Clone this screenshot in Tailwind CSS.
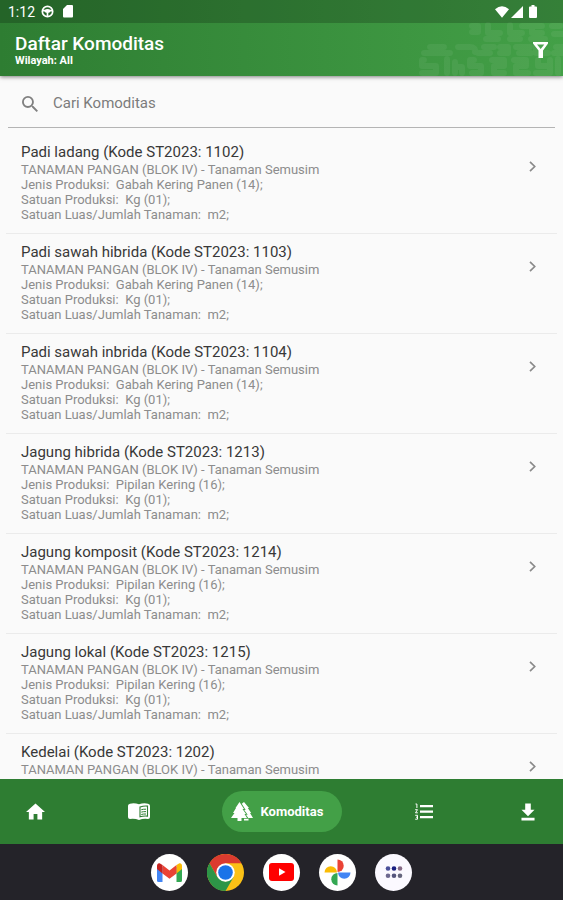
<!DOCTYPE html>
<html lang="id">
<head>
<meta charset="utf-8">
<meta name="viewport" content="width=device-width, initial-scale=1">
<title>Daftar Komoditas</title>
<script src="https://cdn.jsdelivr.net/npm/@tailwindcss/browser@4"></script>
</head>
<body class="flex h-screen flex-col overflow-hidden bg-[#fafafa] font-['Roboto',sans-serif]">

<header class="relative z-10 shrink-0 bg-linear-to-r from-[#2e7d32] to-[#43a047] text-white shadow-[0_1px_4px_rgba(0,0,0,0.5)]">
  <svg class="absolute right-0 bottom-0 h-[76px] w-[146px]" viewBox="417 0 146 76" fill="none" stroke="#fff" stroke-opacity=".06" stroke-width="6" stroke-linecap="round" stroke-linejoin="round" aria-hidden="true">
    <path d="M472 26h6v6h-6M488 25v8h12M510 25v8h12M522 26h10M542 26h-10v7h10M552 26h8M486 39h12M510 39h10M531 39h14M554 34h9"/>
    <path d="M430 47h14M424 53h26M458 47h12q6 0 5 5M478 53h12M484 47h10M500 47h8v6h-8M516 47h14M519 53h12M542 46h-6v7h12M556 47h7M554 53h9"/>
    <path d="M424 60h-2v6h14v7h-14M447 59v14M455 62v11M455 67h7v6M474 60h-4v6h11v7h-9M492 60h12v6h-10v7h10M514 60h12v6h-10v7h12M538 60v6h12v7h-14M550 60v6M558 59v14"/>
  </svg>
  <div class="relative flex h-[23px] items-center justify-between bg-black/20 pr-[22px] pl-2">
    <div class="flex items-center gap-[6px]">
      <span class="text-sm leading-4">1:12</span>
      <svg class="size-[13px]" viewBox="0 0 14 14" fill="none" stroke="#fff" stroke-width="1.8" aria-hidden="true"><circle cx="7" cy="7" r="5.6"/><path d="M2 6h10M7 8v4"/><path d="M4 5.5q3-2.500 6 0v2q-3 2-6 0z" fill="#fff" stroke="none"/></svg>
      <svg class="ml-[3px] h-[13px] w-[10px]" viewBox="0 0 10 13" fill="#fff" aria-hidden="true"><path d="M4 0h5a1 1 0 0 1 1 1v10.500a1 1 0 0 1-1 1H1a1 1 0 0 1-1-1V4z"/></svg>
    </div>
    <div class="flex items-center gap-[2px]">
      <svg class="h-3 w-[14px]" viewBox="0 0 14 12" fill="#fff" aria-hidden="true"><path d="M0 3.200Q7-2.600 14 3.200L7 11.800z"/></svg>
      <svg class="size-3" viewBox="0 0 12 12" fill="#fff" aria-hidden="true"><path d="M12 0v12H0z"/></svg>
      <svg class="mx-1 h-[13px] w-2" viewBox="0 0 8 13" fill="#fff" aria-hidden="true"><path d="M2.500 0h3v1.500H7a1 1 0 0 1 1 1V12a1 1 0 0 1-1 1H1a1 1 0 0 1-1-1V2.500a1 1 0 0 1 1-1h1.500z"/></svg>
    </div>
  </div>
  <div class="relative flex h-[53px] items-center justify-between pr-[14px] pl-[15px]">
    <div>
      <h1 class="text-[19px] leading-[22px] font-medium">Daftar Komoditas</h1>
      <p class="text-[11px] leading-3 font-bold">Wilayah: All</p>
    </div>
    <button type="button" aria-label="Filter"><svg class="h-4 w-[17px]" viewBox="0 0 17 16" fill="#fff" aria-hidden="true"><path fill-rule="evenodd" d="M1 0h15v1.500L11 8.500V16H6.500V8.500L1 1.500zM5 2.500l3.700 4.500L12.300 2.500z"/></svg></button>
  </div>
</header>

<main class="min-h-0 flex-1 overflow-hidden">
  <form class="mx-2 flex h-[52px] items-center gap-[15px] border-b border-[#b4b4b4] pl-[14px]" role="search">
    <svg class="mt-[5px] size-4 shrink-0" viewBox="3 3 17.500 17.500" fill="#808080" aria-hidden="true"><path d="M15.500 14h-.79l-.28-.27A6.470 6.470 0 0 0 16 9.500 6.500 6.500 0 1 0 9.500 16c1.610 0 3.090-.59 4.230-1.570l.27.28v.79l5 4.990L20.490 19l-4.990-5zm-6 0C7.010 14 5 11.990 5 9.500S7.010 5 9.500 5 14 7.010 14 9.500 11.990 14 9.500 14z"/></svg>
    <input type="search" aria-label="Cari Komoditas" placeholder="Cari Komoditas" class="min-w-0 flex-1 bg-transparent pt-0.5 text-[15px] leading-5 text-[#333] outline-none placeholder:text-[#7c7c7c]">
  </form>
  <ul id="daftar" class="pt-[6px]"></ul>
</main>

<template id="baris">
  <li class="mx-[6px] border-b border-[#ebebeb]">
    <a href="#" class="flex items-start justify-between pt-[9px] pr-[21px] pb-[11px] pl-[15px]">
      <div>
        <h2 class="text-[15px] leading-[19px] text-[#383838]"></h2>
        <p class="text-[13px] leading-[15px] whitespace-pre text-[#8c8c8c]"></p>
      </div>
      <svg class="mt-[18px] h-[11px] w-[7px]" viewBox="0 0 7 11" fill="none" stroke="#8a8a8a" stroke-width="1.700" aria-hidden="true"><path d="M1 .8 5.700 5.500 1 10.200"/></svg>
    </a>
  </li>
</template>

<nav class="flex h-[65px] shrink-0 items-center justify-between bg-[#2e7d32] px-[14px] text-white">
  <a href="#" aria-label="Beranda" class="flex w-[42px] justify-center"><svg class="h-[17px] w-[19px]" viewBox="2 3 20 17" fill="#fff" aria-hidden="true"><path d="M10 20v-6h4v6h5v-8h3L12 3 2 12h3v8z"/></svg></a>
  <a href="#" aria-label="Buku" class="flex w-[42px] justify-center"><svg class="h-[17px] w-[22px]" viewBox="0 0 22 17" aria-hidden="true"><path d="M2 .8Q6-.4 11 1.300 16-.4 20 .8q2 .4 2 2V14q0 2-2 2-5-.6-9 1-4-1.600-9-1-2 0-2-2V2.800q0-1.600 2-2z" fill="#fff"/><path d="M12 4q4-1.300 7.500-.9v10q-4-.4-7.500.7z" fill="none" stroke="#2e7d32" stroke-width="1.100"/><path d="M13.300 6.700q2-.6 4.700-.5M13.300 9.100q2-.6 4.700-.5M13.300 11.500q2-.6 4.700-.5" fill="none" stroke="#2e7d32"/></svg></a>
  <a href="#" aria-current="page" class="flex h-[41px] w-[120px] items-center gap-2 rounded-full bg-[#43a047] pl-[9px]">
    <svg class="h-[19px] w-[22px] shrink-0" viewBox="0 0 22 19" fill="#fff" aria-hidden="true"><path d="M8.500 0 13 7h-1.500L15 12h-1.500L16 16h-5.500v3h-4v-3H0l3.500-5H2l3-5H4.500z"/><path d="M10.800 1.800 13 0l5 6h-1.200l3.400 5H19l3 5h-4.500v2.500H13v-1.700h4.800L15 12.800h1.700L13.200 8h1.500z"/></svg>
    <span class="text-[13px] leading-5 font-bold">Komoditas</span>
  </a>
  <a href="#" aria-label="Daftar" class="flex w-[42px] justify-center"><svg class="h-[17px] w-[18px]" viewBox="0 0 18 17" fill="#fff" aria-hidden="true"><path d="M5 2h13v2.300H5zM5 7.500h13v2.300H5zM5 13h13v2.300H5z"/><path d="M.5 1h1.400v4M.2 6.700h2.300L.5 9.800h2.300M.2 12.300h2.300v3.900H.2M1 14.200h1.500" fill="none" stroke="#fff" stroke-width="1"/></svg></a>
  <a href="#" aria-label="Unduh" class="flex w-[42px] justify-center"><svg class="h-[18px] w-[14px]" viewBox="0 0 15 18" fill="#fff" aria-hidden="true"><path d="M4.500 0h6v6.500H14.500L7.500 13.500.5 6.500h4zM.5 15.200h14V18H.5z"/></svg></a>
</nav>

<footer class="flex h-14 shrink-0 items-center justify-center gap-[19px] bg-[#242329]">
  <button type="button" aria-label="Gmail" class="flex size-[37px] items-center justify-center rounded-full bg-white"><svg class="h-[19px] w-[25px]" viewBox="0 0 25 19" aria-hidden="true"><path d="M0 4h5.500v15H1.500A1.500 1.500 0 0 1 0 17.500z" fill="#4285f4"/><path d="M19.500 4H25v13.500a1.500 1.500 0 0 1-1.500 1.500h-4z" fill="#34a853"/><path d="M19.500 2 22 .4C23.500-.4 25 .8 25 2.500V6l-5.500 4.500z" fill="#fbbc04"/><path d="M5.500 10.500V2l7 5.500 7-5.500v8.500l-7 5.200z" fill="#ea4335"/><path d="M0 2.500C0 .8 1.500-.4 3 .4L5.500 2v8.500L0 6z" fill="#c5221f"/></svg></button>
  <button type="button" aria-label="Chrome" class="size-[37px]"><svg class="size-full" viewBox="0 0 38 38" aria-hidden="true"><circle cx="19" cy="19" r="19" fill="#fbc116"/><path d="M2.540 9.500A19 19 0 0 1 35.460 9.500H19V19l-8.230 4.750z" fill="#db3b2f"/><path d="M2.540 9.500 10.770 23.750 19 28.500l8.230-4.750L19 38A19 19 0 0 1 2.540 9.500z" fill="#2d9547"/><circle cx="19" cy="19" r="9.500" fill="#fff"/><circle cx="19" cy="19" r="7.500" fill="#1a73e8"/></svg></button>
  <button type="button" aria-label="YouTube" class="flex size-[37px] items-center justify-center rounded-full bg-white"><svg class="h-[18px] w-[25px]" viewBox="0 0 25 18" aria-hidden="true"><rect width="25" height="18" rx="3" fill="#f00"/><path d="M10 5.200v7.600L16.500 9z" fill="#fff"/></svg></button>
  <button type="button" aria-label="Foto" class="flex size-[37px] items-center justify-center rounded-full bg-white"><svg class="size-[27px]" viewBox="0 0 26 26" aria-hidden="true"><path d="M13 0.500a6 6 0 0 1 0 12z" fill="#ea4335"/><path d="M25.500 13a6 6 0 0 1-12 0z" fill="#4285f4"/><path d="M13 25.500a6 6 0 0 1 0-12z" fill="#34a853"/><path d="M.5 13a6 6 0 0 1 12 0z" fill="#fbbc04"/></svg></button>
  <button type="button" aria-label="Semua aplikasi" class="flex size-[37px] items-center justify-center rounded-full bg-[#fbf9ff]"><svg class="h-3 w-[18px]" viewBox="0 0 18 12" aria-hidden="true"><circle cx="3" cy="2.500" r="2.300" fill="#4a4f9a"/><circle cx="9" cy="2.500" r="2.300" fill="#1a1f80"/><circle cx="15" cy="2.500" r="2.300" fill="#866a86"/><circle cx="3" cy="9.700" r="2.300" fill="#6d688f"/><circle cx="9" cy="9.700" r="2.300" fill="#55557d"/><circle cx="15" cy="9.700" r="2.300" fill="#65657d"/></svg></button>
</footer>

<script>
  const komoditas = [
    ["Padi ladang", 1102, "Gabah Kering Panen (14)"],
    ["Padi sawah hibrida", 1103, "Gabah Kering Panen (14)"],
    ["Padi sawah inbrida", 1104, "Gabah Kering Panen (14)"],
    ["Jagung hibrida", 1213, "Pipilan Kering (16)"],
    ["Jagung komposit", 1214, "Pipilan Kering (16)"],
    ["Jagung lokal", 1215, "Pipilan Kering (16)"],
    ["Kedelai", 1202],
  ];
  const baris = document.getElementById("baris");
  const daftar = document.getElementById("daftar");
  for (const [nama, kode, produk] of komoditas) {
    const item = baris.content.cloneNode(true);
    item.querySelector("h2").textContent = `${nama} (Kode ST2023: ${kode})`;
    const rincian = produk
      ? `\nJenis Produksi:  ${produk};\nSatuan Produksi:  Kg (01);\nSatuan Luas/Jumlah Tanaman:  m2;`
      : "";
    item.querySelector("p").textContent = "TANAMAN PANGAN (BLOK IV) - Tanaman Semusim" + rincian;
    daftar.append(item);
  }
</script>
</body>
</html>
